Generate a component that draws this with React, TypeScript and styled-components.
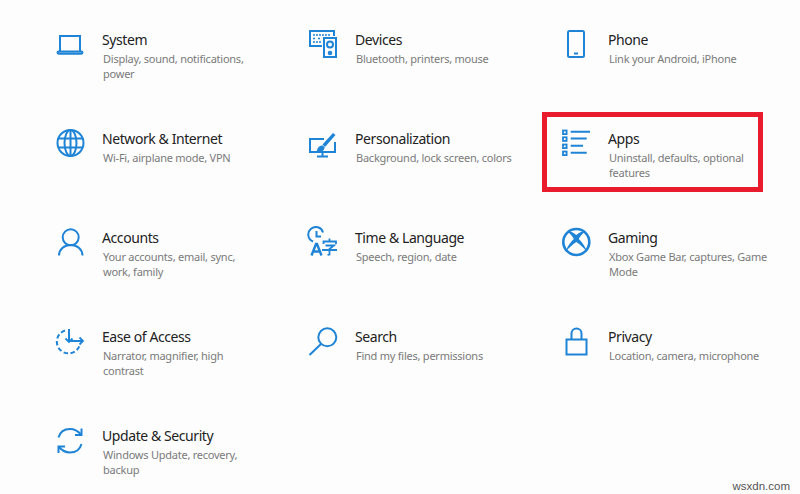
import React, { FC, ReactNode } from 'react';
import styled, { createGlobalStyle } from 'styled-components';

const GlobalStyle = createGlobalStyle`
    html, body {
        margin: 0;
        padding: 0;
        background: #fdfdfd;
    }
    body {
        font-family: "Noto Sans", "Open Sans", sans-serif;
        overflow: hidden;
    }
`;

const Page = styled.main`
    position: relative;
    box-sizing: border-box;
    width: 800px;
    height: 494px;
    padding: 28px 0 0 54px;
    background: #fdfdfd;
    overflow: hidden;
`;

const Grid = styled.div`
    display: grid;
    grid-template-columns: repeat(3, 253px);
    grid-auto-rows: 99px;
`;

const Cell = styled.div<{ $highlighted?: boolean }>`
    position: relative;
    display: flex;
    align-items: flex-start;
    gap: 16px;
    ${(p) =>
        p.$highlighted &&
        `
        &::after {
            content: '';
            position: absolute;
            left: -18px;
            top: -15px;
            box-sizing: border-box;
            width: 221px;
            height: 80px;
            border: 5px solid #e81c2c;
        }
    `}
`;

const Icon = styled.svg`
    flex: none;
    width: 32px;
    height: 32px;
    fill: none;
    stroke: #1f84d6;
    stroke-width: 2;
`;

const Text = styled.div`
    padding-top: 2px;
    width: 162px;
`;

const Title = styled.div`
    font-size: 14px;
    line-height: 20px;
    letter-spacing: -0.42px;
    color: #222;
`;

const Description = styled.div`
    margin: 1px 0 0 1px;
    font-size: 11px;
    line-height: 15px;
    letter-spacing: -0.24px;
    color: #7a7a7a;
`;

const Watermark = styled.span`
    position: absolute;
    right: 10px;
    bottom: 2px;
    font-family: "Liberation Sans", sans-serif;
    font-size: 11.5px;
    color: #555;
`;

const Glyph: FC<{ children: ReactNode }> = ({ children }) => (
    <Icon viewBox="0 0 32 32">{children}</Icon>
);

const items: { title: string; text: string; icon: ReactNode; highlighted?: boolean }[] = [
    {
        title: 'System',
        text: 'Display, sound, notifications, power',
        icon: (
            <>
                <path d="M6 23V8h20v15" />
                <rect x="3.5" y="23.5" width="25" height="2.2" rx="1.1" />
            </>
        ),
    },
    {
        title: 'Devices',
        text: 'Bluetooth, printers, mouse',
        icon: (
            <>
                <path d="M15 18H3V3h24v5" />
                <path d="M6 7h17M6 10.5h3M11 10.5h3M6 14h8" strokeWidth="1.6" strokeDasharray="2 1" />
                <rect x="17" y="10" width="12" height="19" />
                <circle cx="23" cy="16.5" r="3" />
                <circle cx="23" cy="25" r="1.3" />
            </>
        ),
    },
    {
        title: 'Phone',
        text: 'Link your Android, iPhone',
        icon: (
            <>
                <rect x="8" y="3" width="16" height="26" rx="1.5" />
                <path d="M14 25.5h4" />
            </>
        ),
    },
    {
        title: 'Network & Internet',
        text: 'Wi-Fi, airplane mode, VPN',
        icon: (
            <>
                <circle cx="16.5" cy="16" r="13" />
                <ellipse cx="16.5" cy="16" rx="6" ry="13" />
                <path d="M16.5 3v26M4.5 11.5h24M4.5 20.5h24" />
            </>
        ),
    },
    {
        title: 'Personalization',
        text: 'Background, lock screen, colors',
        icon: (
            <>
                <path d="M17 12H3v13h25V15" />
                <path d="M15.5 25v4M10 29.5h11" />
                <path d="M10.5 24c.5-3.500 2.500-5 5-5l1.500 1.500c0 2.500-2.500 4-6.500 3.500z" fill="#1f84d6" strokeWidth="1.2" />
                <path d="M15.500 17.500L26 6l2.500 2L18 20z" fill="#1f84d6" stroke="none" />
            </>
        ),
    },
    {
        title: 'Apps',
        text: 'Uninstall, defaults, optional features',
        highlighted: true,
        icon: (
            <>
                <rect x="3" y="3.500" width="3.600" height="3.600" strokeWidth="1.800" />
                <rect x="3" y="10.300" width="3.600" height="3.600" strokeWidth="1.800" />
                <rect x="3" y="17.500" width="3.600" height="3.600" strokeWidth="1.800" />
                <rect x="3" y="24.500" width="3.600" height="3.600" strokeWidth="1.800" />
                <path d="M10.700 4.700H30M10.700 11.500h16M10.700 18.700H23M10.700 25.700h16" />
            </>
        ),
    },
    {
        title: 'Accounts',
        text: 'Your accounts, email, sync, work, family',
        icon: (
            <>
                <circle cx="16.700" cy="11.300" r="8" />
                <path d="M5 29.500c0-6 5-10.500 11.700-10.500s11.800 4.500 11.800 10.500" />
            </>
        ),
    },
    {
        title: 'Time & Language',
        text: 'Speech, region, date',
        icon: (
            <>
                <path d="M6 15.500a7.500 7.500 0 1 1 10-9" />
                <path d="M9.500 5v5.500H14" />
                <path d="M4.500 29.500L9 18h1l4.500 11.500M6 25.500h7" strokeWidth="2.400" />
                <path d="M16.500 18v-2.500H29V18M22.500 12.500v3M18.500 19.500H27l-4.500 3.500v5.500l-2 .5M15 24h15" strokeWidth="1.800" />
            </>
        ),
    },
    {
        title: 'Gaming',
        text: 'Xbox Game Bar, captures, Game Mode',
        icon: (
            <>
                <circle cx="16.300" cy="16" r="13" strokeWidth="2.600" />
                <path
                    d="M7.500 5.500C11 5 14 7 16.300 9c2.300-2 5.300-4 8.800-3.500-2.500 2-5.600 5.500-6.300 7.500 3.500 3.500 7 8 8.200 12.500-3-3.500-7-7-10.700-9.500-3.700 2.500-7.700 6-10.700 9.500C6.800 21 10.300 16.500 13.800 13c-.7-2-3.800-5.500-6.300-7.500z"
                    fill="#1f84d6"
                    stroke="none"
                />
            </>
        ),
    },
    {
        title: 'Ease of Access',
        text: 'Narrator, magnifier, high contrast',
        icon: (
            <>
                <path d="M11 5.500A11.700 11.700 0 1 0 26 19" strokeDasharray="4.500 2.500" />
                <path d="M15 4v12.500M15 16h14" />
                <path d="M11.500 13.500l3.500 3.500 3.500-3.500M25.500 12.500l3.500 3.500-3.500 3.500" strokeWidth="1.800" />
            </>
        ),
    },
    {
        title: 'Search',
        text: 'Find my files, permissions',
        icon: (
            <>
                <circle cx="20.300" cy="12.300" r="9" />
                <path d="M14 19L2.500 30" />
            </>
        ),
    },
    {
        title: 'Privacy',
        text: 'Location, camera, microphone',
        icon: (
            <>
                <rect x="6.500" y="14.500" width="20" height="15" />
                <path d="M11.500 14.500V8.500a5 5 0 0 1 10 0v6" />
            </>
        ),
    },
    {
        title: 'Update & Security',
        text: 'Windows Update, recovery, backup',
        icon: (
            <>
                <path d="M4.500 13.500C6 8 10.500 5 16 5c4.500 0 8 2 11 5.500" />
                <path d="M27.500 4.500v6.500h-6.500" />
                <path d="M27.500 20C26 25.500 21.500 28.500 16 28.500c-4.500 0-8-2-11-5.500" />
                <path d="M4.500 29v-6.500H11" />
            </>
        ),
    },
];

const App: FC = () => (
    <>
        <GlobalStyle />
        <Page>
            <Grid>
                {items.map((item) => (
                    <Cell key={item.title} $highlighted={item.highlighted}>
                        <Glyph>{item.icon}</Glyph>
                        <Text>
                            <Title>{item.title}</Title>
                            <Description>{item.text}</Description>
                        </Text>
                    </Cell>
                ))}
            </Grid>
            <Watermark>wsxdn.com</Watermark>
        </Page>
    </>
);

export default App;
